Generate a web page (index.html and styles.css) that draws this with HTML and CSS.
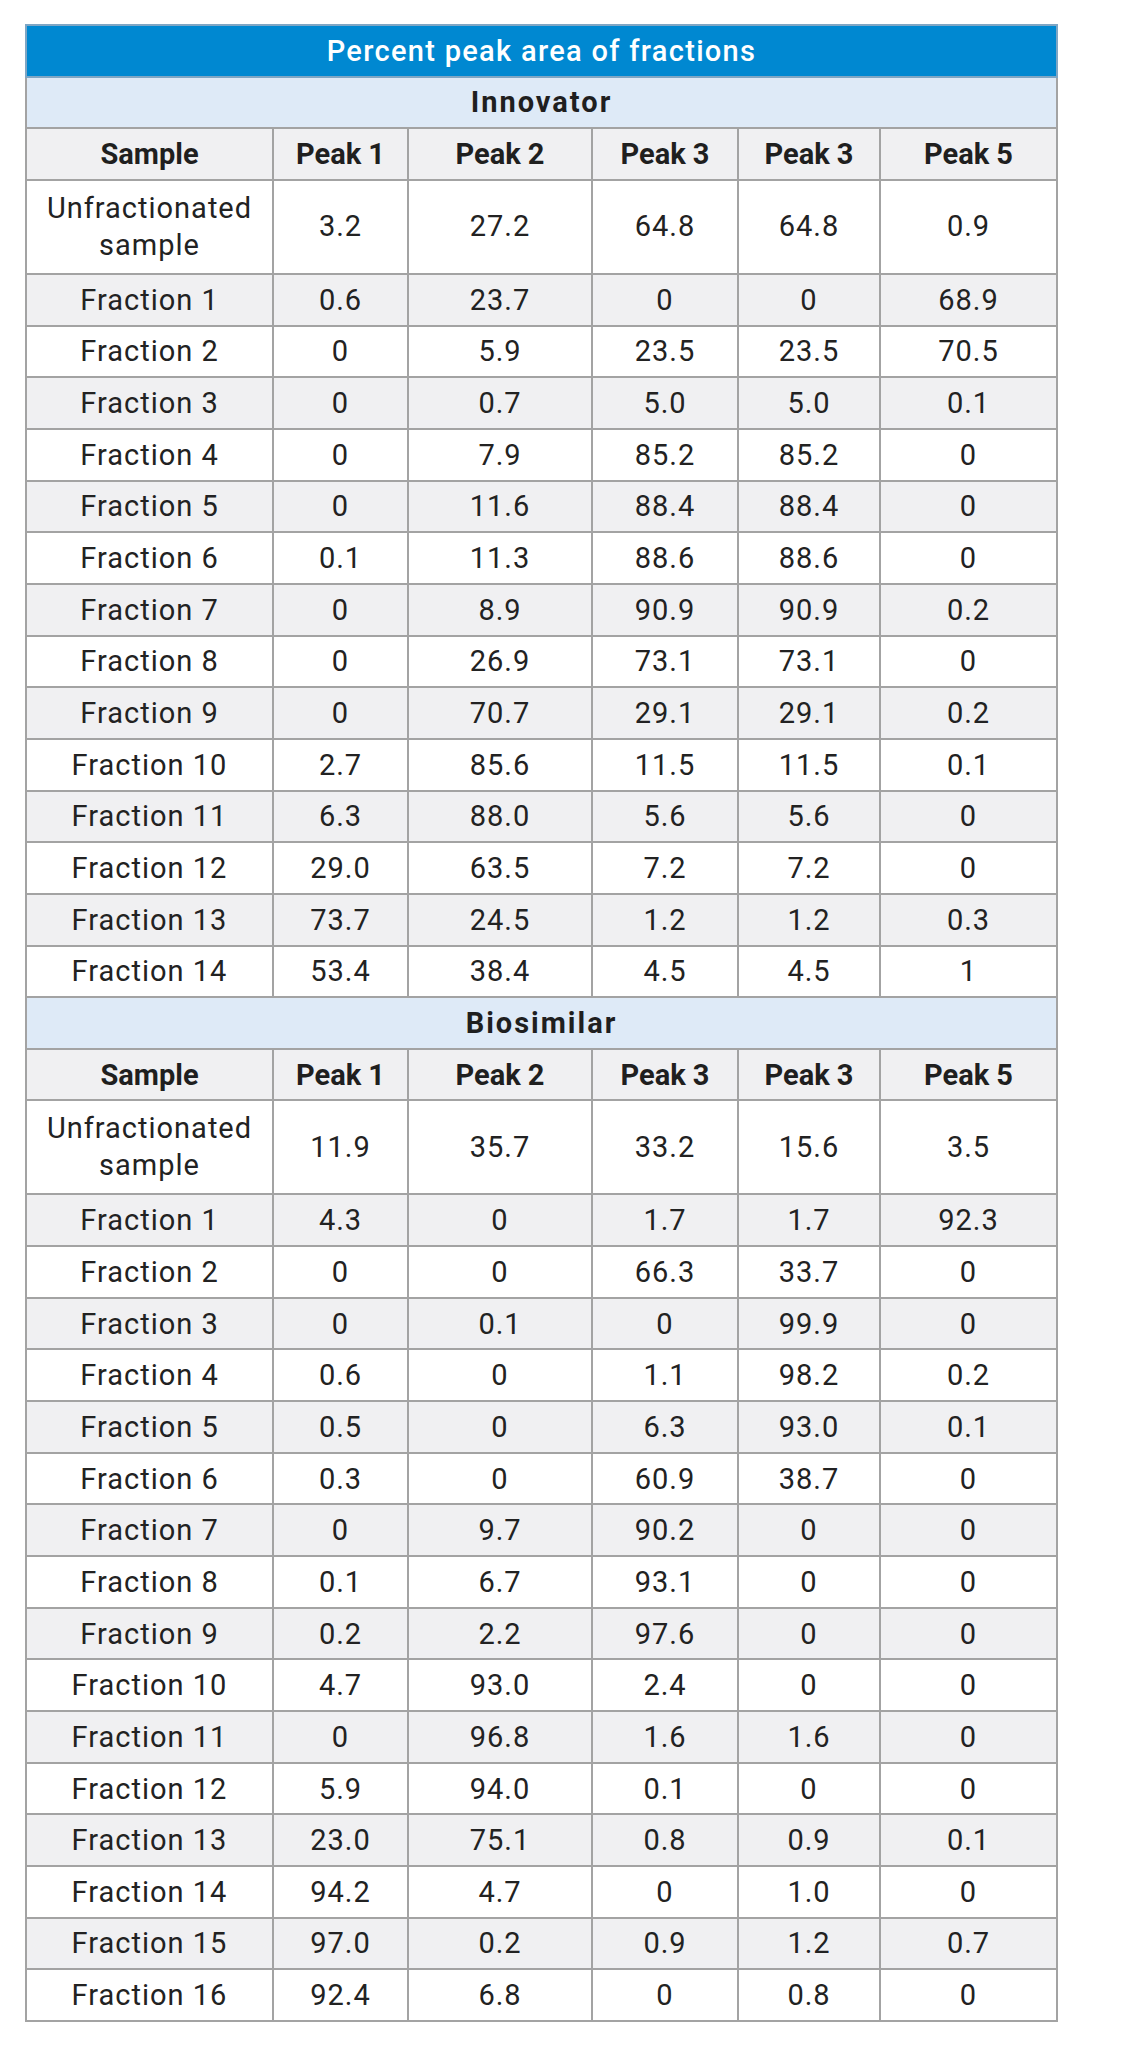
FILE: index.html
```html
<!DOCTYPE html>
<html lang="en">
<head>
<meta charset="utf-8">
<title>Percent peak area of fractions</title>
<link rel="stylesheet" href="styles.css">
</head>
<body>
<table class="peaks">
  <colgroup>
    <col class="c-sample"><col class="c-p1"><col class="c-p2"><col class="c-p3"><col class="c-p4"><col class="c-p5">
  </colgroup>
  <tbody>
    <tr class="title"><td colspan="6">Percent peak area of fractions</td></tr>
    <tr class="band"><td colspan="6">Innovator</td></tr>
    <tr class="head"><th>Sample</th><th>Peak 1</th><th>Peak 2</th><th>Peak 3</th><th>Peak 3</th><th>Peak 5</th></tr>
    <tr class="tall"><td>Unfractionated<br>sample</td><td>3.2</td><td>27.2</td><td>64.8</td><td>64.8</td><td>0.9</td></tr>
    <tr class="odd"><td>Fraction 1</td><td>0.6</td><td>23.7</td><td>0</td><td>0</td><td>68.9</td></tr>
    <tr><td>Fraction 2</td><td>0</td><td>5.9</td><td>23.5</td><td>23.5</td><td>70.5</td></tr>
    <tr class="odd"><td>Fraction 3</td><td>0</td><td>0.7</td><td>5.0</td><td>5.0</td><td>0.1</td></tr>
    <tr><td>Fraction 4</td><td>0</td><td>7.9</td><td>85.2</td><td>85.2</td><td>0</td></tr>
    <tr class="odd"><td>Fraction 5</td><td>0</td><td>11.6</td><td>88.4</td><td>88.4</td><td>0</td></tr>
    <tr><td>Fraction 6</td><td>0.1</td><td>11.3</td><td>88.6</td><td>88.6</td><td>0</td></tr>
    <tr class="odd"><td>Fraction 7</td><td>0</td><td>8.9</td><td>90.9</td><td>90.9</td><td>0.2</td></tr>
    <tr><td>Fraction 8</td><td>0</td><td>26.9</td><td>73.1</td><td>73.1</td><td>0</td></tr>
    <tr class="odd"><td>Fraction 9</td><td>0</td><td>70.7</td><td>29.1</td><td>29.1</td><td>0.2</td></tr>
    <tr><td>Fraction 10</td><td>2.7</td><td>85.6</td><td>11.5</td><td>11.5</td><td>0.1</td></tr>
    <tr class="odd"><td>Fraction 11</td><td>6.3</td><td>88.0</td><td>5.6</td><td>5.6</td><td>0</td></tr>
    <tr><td>Fraction 12</td><td>29.0</td><td>63.5</td><td>7.2</td><td>7.2</td><td>0</td></tr>
    <tr class="odd"><td>Fraction 13</td><td>73.7</td><td>24.5</td><td>1.2</td><td>1.2</td><td>0.3</td></tr>
    <tr><td>Fraction 14</td><td>53.4</td><td>38.4</td><td>4.5</td><td>4.5</td><td>1</td></tr>
    <tr class="band"><td colspan="6">Biosimilar</td></tr>
    <tr class="head"><th>Sample</th><th>Peak 1</th><th>Peak 2</th><th>Peak 3</th><th>Peak 3</th><th>Peak 5</th></tr>
    <tr class="tall"><td>Unfractionated<br>sample</td><td>11.9</td><td>35.7</td><td>33.2</td><td>15.6</td><td>3.5</td></tr>
    <tr class="odd"><td>Fraction 1</td><td>4.3</td><td>0</td><td>1.7</td><td>1.7</td><td>92.3</td></tr>
    <tr><td>Fraction 2</td><td>0</td><td>0</td><td>66.3</td><td>33.7</td><td>0</td></tr>
    <tr class="odd"><td>Fraction 3</td><td>0</td><td>0.1</td><td>0</td><td>99.9</td><td>0</td></tr>
    <tr><td>Fraction 4</td><td>0.6</td><td>0</td><td>1.1</td><td>98.2</td><td>0.2</td></tr>
    <tr class="odd"><td>Fraction 5</td><td>0.5</td><td>0</td><td>6.3</td><td>93.0</td><td>0.1</td></tr>
    <tr><td>Fraction 6</td><td>0.3</td><td>0</td><td>60.9</td><td>38.7</td><td>0</td></tr>
    <tr class="odd"><td>Fraction 7</td><td>0</td><td>9.7</td><td>90.2</td><td>0</td><td>0</td></tr>
    <tr><td>Fraction 8</td><td>0.1</td><td>6.7</td><td>93.1</td><td>0</td><td>0</td></tr>
    <tr class="odd"><td>Fraction 9</td><td>0.2</td><td>2.2</td><td>97.6</td><td>0</td><td>0</td></tr>
    <tr><td>Fraction 10</td><td>4.7</td><td>93.0</td><td>2.4</td><td>0</td><td>0</td></tr>
    <tr class="odd"><td>Fraction 11</td><td>0</td><td>96.8</td><td>1.6</td><td>1.6</td><td>0</td></tr>
    <tr><td>Fraction 12</td><td>5.9</td><td>94.0</td><td>0.1</td><td>0</td><td>0</td></tr>
    <tr class="odd"><td>Fraction 13</td><td>23.0</td><td>75.1</td><td>0.8</td><td>0.9</td><td>0.1</td></tr>
    <tr><td>Fraction 14</td><td>94.2</td><td>4.7</td><td>0</td><td>1.0</td><td>0</td></tr>
    <tr class="odd"><td>Fraction 15</td><td>97.0</td><td>0.2</td><td>0.9</td><td>1.2</td><td>0.7</td></tr>
    <tr><td>Fraction 16</td><td>92.4</td><td>6.8</td><td>0</td><td>0.8</td><td>0</td></tr>
  </tbody>
</table>
</body>
</html>
```

FILE: styles.css
```css
html, body {
  margin: 0;
  padding: 0;
  background: #ffffff;
}

body {
  padding: 24px 0 0 25px;
  font-family: Roboto, "Liberation Sans", Arial, sans-serif;
  color: #222222;
}

.peaks {
  border-collapse: collapse;
  table-layout: fixed;
  width: 1033px;
  font-size: 29px;
  letter-spacing: 1px;
}

.c-sample { width: 247px; }
.c-p1 { width: 135px; }
.c-p2 { width: 184px; }
.c-p3 { width: 146px; }
.c-p4 { width: 142px; }
.c-p5 { width: 177px; }

.peaks td,
.peaks th {
  border: 2px solid #a3a3a3;
  padding: 0;
  height: 49.66px;
  text-align: center;
  vertical-align: middle;
  line-height: 36px;
  font-weight: 400;
}

.peaks .title td {
  background: #0088d1;
  color: #ffffff;
  font-weight: 500;
  letter-spacing: 1.3px;
  border-color: #7fa6c4;
}

.peaks .band td {
  background: #deeaf7;
  color: #1f1f1f;
  font-weight: 700;
  letter-spacing: 2px;
}

.peaks .head th {
  background: #f0f0f2;
  color: #1f1f1f;
  font-weight: 700;
  letter-spacing: 0;
}

.peaks .tall td {
  height: 92px;
  line-height: 37px;
}

.peaks .odd td {
  background: #f0f0f2;
}
```
